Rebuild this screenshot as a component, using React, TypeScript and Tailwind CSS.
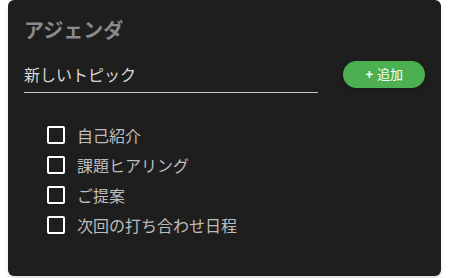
const items = ['自己紹介', '課題ヒアリング', 'ご提案', '次回の打ち合わせ日程'];

export default function App() {
  return (
    <div className="w-[450px] h-[278px] bg-white" style={{ fontFamily: '"Noto Sans CJK JP", "Noto Sans", sans-serif' }}>
      <div className="ml-2 w-[433px] h-[276px] rounded-md bg-[#1e1e1e] shadow-md px-4 pt-[16px]">
        <h2 className="text-[20px] leading-[28px] font-bold text-[#8a8a8a]">アジェンダ</h2>
        <div className="flex items-center mt-[15px]">
          <div className="w-[296px] border-b border-[#c8c8c8] pb-[6px] pt-[3px]">
            <span className="text-[16px] leading-[24px] text-[#d8d8d8]">新しいトピック</span>
          </div>
          <button className="ml-[25px] w-[82px] h-[27px] rounded-full bg-[#4caf50] text-white text-[13px] flex items-center justify-center gap-1 shadow-md -mt-[4px]">
            <span className="font-bold">+</span>
            <span>追加</span>
          </button>
        </div>
        <ul className="mt-[27px] pl-[23px] flex flex-col">
          {items.map((t) => (
            <li key={t} className="flex items-center h-[30px]">
              <span className="w-[18px] h-[18px] border-2 border-white rounded-[2px]" />
              <span className="ml-[12px] text-[16px] text-[#bdbdbd]">{t}</span>
            </li>
          ))}
        </ul>
      </div>
    </div>
  );
}
